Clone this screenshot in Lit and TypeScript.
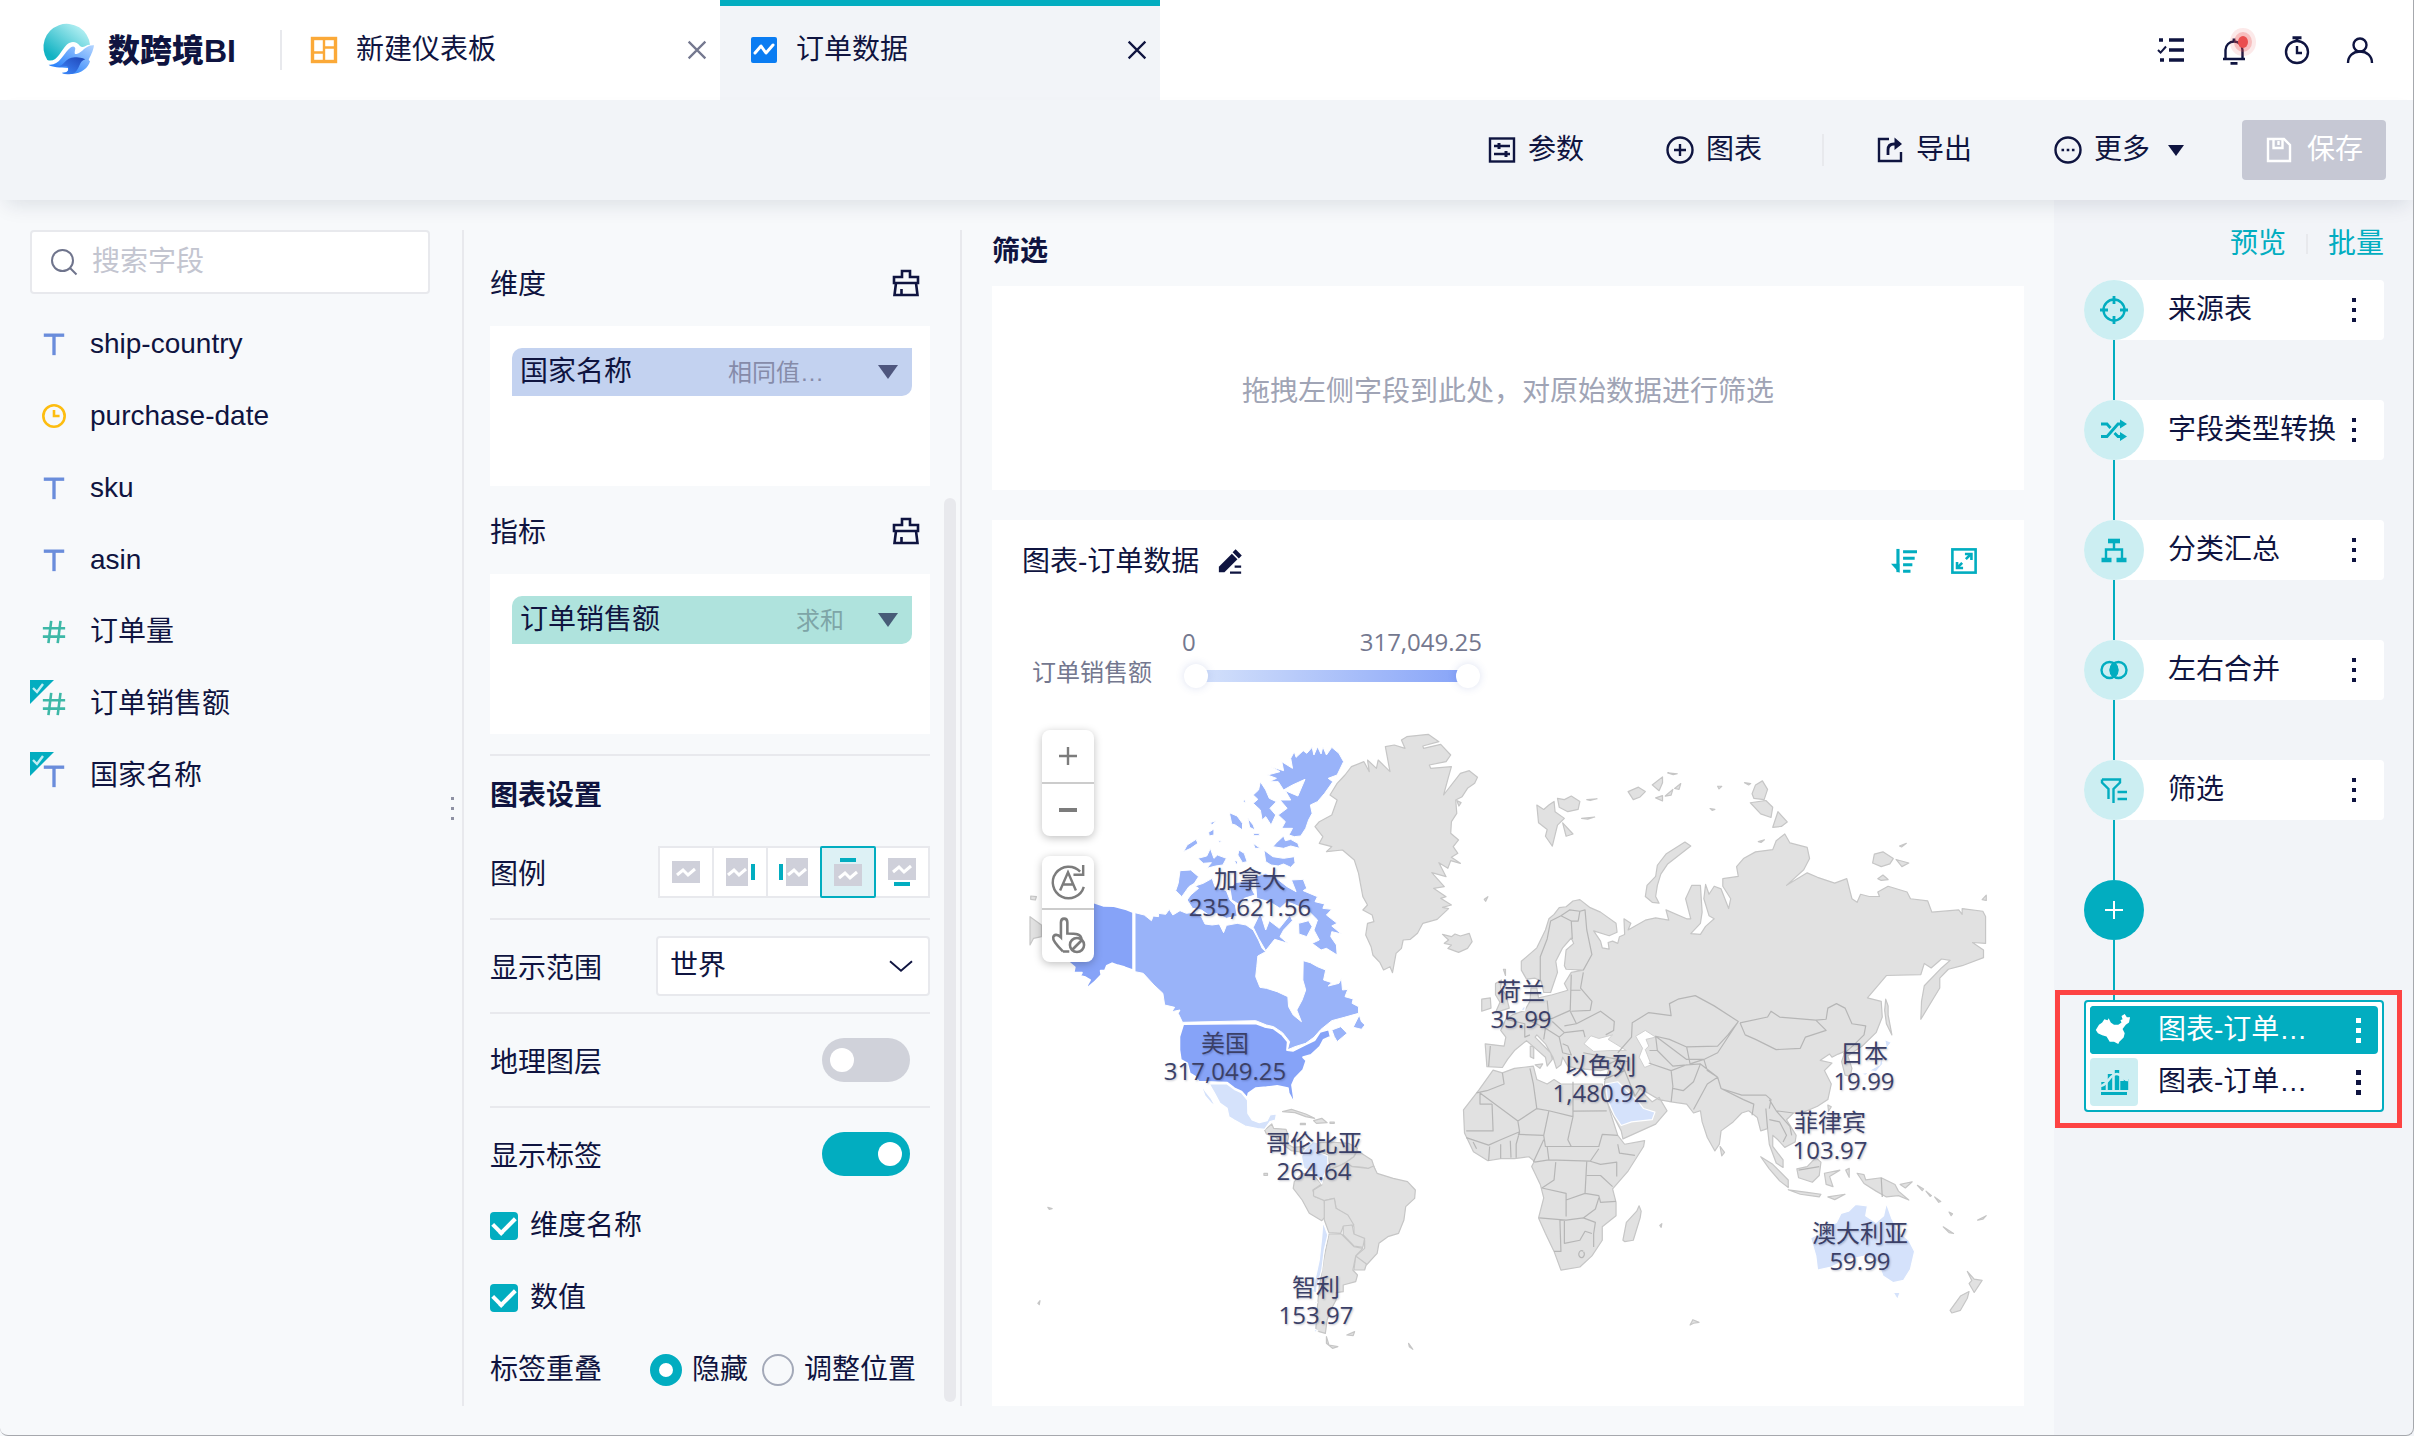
import { LitElement, html, css, svg, TemplateResult } from "lit";
import { customElement, state } from "lit/decorators.js";
import { classMap } from "lit/directives/class-map.js";

const icon = (size: number, body: TemplateResult, cls = "") =>
  html`<svg class="icon ${cls}" width=${size} height=${size} viewBox="0 0 28 28" fill="none" stroke="currentColor" stroke-width="2.4" aria-hidden="true">${body}</svg>`;

const icons = {
  board: svg`<rect x="2.5" y="2.5" width="23" height="23" stroke-width="3.4"/><path d="M14 3v22M3 16.500h11M14 11.500h11"/>`,
  dataset: svg`<rect x="1" y="1" width="26" height="26" rx="2" fill="#0a7cf2" stroke="none"/><path d="M5 17l6-7 5 7 7-8" stroke="#fff" stroke-width="3" stroke-linejoin="round" stroke-linecap="round"/>`,
  close: svg`<path d="M5 5l18 18M23 5L5 23"/>`,
  tasks: svg`<path d="M12 4h15M12 14h15M12 24h15" stroke-width="3.6"/><path d="M2 4h4M3 24h4" stroke-width="3.6"/><path d="M1 14l2.600 2.600L9 10.500" stroke-width="2"/>`,
  bell: svg`<path d="M3 23h22M5.500 23V14a8.500 8.500 0 0 1 17 0v9" stroke-linejoin="round"/><path d="M10.500 27.400h7M14 5V2.500" stroke-width="2.800"/>`,
  timer: svg`<circle cx="14" cy="16" r="11"/><path d="M9.500 1.800h9M14 2v4" stroke-width="3"/><path d="M14 10v7h5"/>`,
  user: svg`<circle cx="14" cy="9" r="6.500"/><path d="M2 27c0-7 5-11.500 12-11.500S26 20 26 27"/>`,
  params: svg`<rect x="2" y="2.500" width="24" height="23"/><path d="M6 10h16M6 18h16"/><path d="M11 7v6M18 15v6" stroke-width="3"/>`,
  plusCircle: svg`<circle cx="14" cy="14" r="12.500"/><path d="M14 8v12M8 14h12"/>`,
  exportFile: svg`<path d="M13 3H3v22h22v-9"/><path d="M12 19v-5c0-4 2-6 6-6h6" stroke-width="2.800"/><path d="M18.500 1.500L26 8l-7.500 6z" fill="currentColor" stroke="none"/>`,
  more: svg`<circle cx="14" cy="14" r="12.500"/><path d="M7.500 14h2.600M12.700 14h2.600M17.900 14h2.600" stroke-width="2.600"/>`,
  save: svg`<path d="M3 3h16l6 6v16H3z"/><path d="M8.500 3v9h9V3M13.500 5v4"/>`,
  search: svg`<circle cx="12.500" cy="12.500" r="10.500" stroke-width="2"/><path d="M20 20l6.500 6.500" stroke-width="2"/>`,
  text: svg`<path d="M3 4.500h22" stroke-width="3.600"/><path d="M14 4v22" stroke-width="3.600"/>`,
  date: svg`<circle cx="14" cy="14" r="11.500" stroke-width="2.800"/><path d="M14 7.500V14h6" stroke-width="2.800"/>`,
  number: svg`<path d="M2 10h24M2 19h24M11 2L8 26M21 2l-3 24" stroke-width="2.800"/>`,
  broom: svg`<path d="M2 8h8V2h8v6h8v6H2zM4 14L2.500 26h23L24 14M9.500 26v-6" stroke-width="2.600"/>`,
  edit: svg`<path d="M3 19L17 5l6 6L9 25H3z" transform="translate(-1 0)" fill="currentColor" stroke="none"/><path d="M20 2l5 5-1.500 1.500-5-5z" fill="currentColor"/><path d="M14 25.500h12M19 19h7" stroke-width="2.400"/>`,
  sort: svg`<path d="M7.500 1v25" stroke-width="3.400"/><path d="M0 17h9v10z" fill="currentColor" stroke="none"/><path d="M13 4h15M13 11h12.500M13 18h10M13 25h8" stroke-width="3.200"/>`,
  expand: svg`<rect x="1.500" y="1.500" width="25" height="25" stroke-width="2.800"/><path d="M16 12l5-5M7 21l5-5" stroke-width="2.800"/><path d="M15 6.500h7V13M13 21.500H6.500V15" stroke-width="2.800"/>`,
  target: svg`<circle cx="14" cy="14" r="10.500"/><path d="M14 0v8M14 20v8M0 14h8M20 14h8" stroke-width="2.800"/>`,
  shuffle: svg`<path d="M1 8h6l3.500 4M1 20.500h6L18 8h4M14.500 17l3.500 3.500h4" stroke-width="2.800"/><path d="M20 3.500L27 8l-7 4.500zM20 16l7 4.500-7 4.500z" fill="currentColor" stroke="none"/>`,
  tree: svg`<path d="M8 5h12" stroke-width="4.600"/><path d="M14 6v7M6 23v-9.500h16V23"/><path d="M1.500 24h10M16.500 24h10" stroke-width="4.600"/>`,
  merge: svg`<circle cx="9.500" cy="14" r="8"/><circle cx="18.500" cy="14" r="8"/><path d="M14 7.500a8.500 8.500 0 0 1 0 13a8.500 8.500 0 0 1 0-13z" fill="currentColor"/>`,
  filter: svg`<path d="M2 3.500h18v3L13.500 13v14M8.500 23V13L2 6.500v-3"/><path d="M17.500 16h9.500M17.500 23h9.500"/>`,
  plus: svg`<path d="M14 5v18M5 14h18" stroke-width="2"/>`,
  china: svg`<path d="M0 9l3-2 2-3 3 1 1-2 2 4 3 2 4 0 3-2 -1-2 2-1-1-3 3-2 2 3 3 0-1 5-3 2-3 4 2 4-1 4-4 4-1 2-4-2-4 0-3-5-4-1-4-2-2-3z" fill="currentColor" stroke="none"/>`,
  bars: svg`<path d="M1 25.500h26" stroke-width="3"/><path d="M3.500 22v-8M10 22V6M17 22V2M22.500 22v-9M26 22V11" stroke-width="4.400"/><path d="M0 18c8 0 9-12 17-12 5 0 6 6 11 6" stroke="#cceef2" stroke-width="2.600"/>`,
};

/* Coastlines are digitised on two sheets: west (2.8 x 3 units per px) and east (2.9 x 2.24). */
const LAND_NORTH = [
  "M1195 710L1255 703 1285 725 1240 738 1242 745 1290 733 1318 765 1305 785 1258 795 1262 805 1320 800 1312 830 1298 885 1345 820 1370 812 1393 832 1385 850 1365 865 1350 890 1332 900 1335 940 1320 965 1318 1000 1340 1020 1325 1040 1338 1060 1320 1072 1345 1090 1318 1082 1310 1105 1285 1088 1305 1130 1265 1118 1300 1160 1270 1165 1305 1190 1290 1195 1320 1215 1295 1222 1312 1226 1280 1258 1240 1270 1225 1300 1205 1318 1185 1320 1180 1345 1165 1360 1155 1418 1148 1400 1130 1410 1120 1388 1100 1365 1095 1340 1080 1305 1085 1270 1103 1265 1098 1245 1072 1230 1085 1215 1072 1190 1065 1150 1060 1120 1048 1080 1015 1050 970 1055 985 1040 950 1030 960 1010 938 980 950 965 985 945 1000 900 980 885 1000 850 1022 825 1040 800 1075 785 1090 815 1085 780 1110 805 1115 780 1148 815 1135 740 1160 735 1190 745 1180 720Z",
  "M1295 1303L1320 1310 1330 1302 1345 1308 1370 1300 1378 1325 1365 1345 1340 1357 1310 1345 1320 1335 1300 1330 1312 1320Z",
  "M140 1250L172 1275 172 1310 150 1315 140 1335ZM142 1188L158 1190 155 1200 142 1198Z",
  "M1412 1198l10 -8 -6 14ZM1335 902l12 6 -6 10Z",
];
const CANADA = [
  "M434 1238L460 1245 480 1262 485 1248 500 1250 500 1240 520 1243 530 1228 540 1245 560 1232 578 1240 600 1236 620 1250 630 1272 650 1275 670 1272 682 1298 690 1276 720 1270 745 1275 765 1290 780 1320 790 1345 800 1355 778 1368 775 1400 772 1430 784 1462 802 1465 832 1475 862 1490 864 1520 877 1545 900 1565 887 1530 902 1500 912 1470 904 1440 905 1382 925 1388 945 1400 968 1410 962 1440 985 1448 975 1458 1005 1450 1012 1435 1015 1470 1030 1468 1022 1490 1045 1497 1042 1510 1060 1520 1060 1540 1020 1552 985 1562 955 1588 935 1612 912 1630 882 1640 860 1650 867 1625 847 1598 822 1580 802 1575 772 1562 567 1567 555 1540 560 1530 537 1535 545 1522 517 1515 512 1480 487 1455 457 1420 434 1415Z",
  "M870 775L880 755 885 772 905 752 915 760 930 742 935 765 945 740 955 762 960 740 970 765 985 742 1005 760 1018 785 1000 825 975 835 988 845 965 880 945 905 925 915 930 940 920 960 912 985 898 1008 880 1010 865 1005 875 985 845 985 855 965 835 945 860 925 840 900 870 900 855 872 890 888 910 838 875 855 850 870 835 845 810 845 830 835 805 825 840 815 815 800 850 812 845 785 875 805Z",
  "M785 845L800 870 810 895 830 905 812 925 828 945 815 975 800 950 790 960 785 930 765 910 778 898 765 885 780 870Z",
  "M740 897l5 12 -8 -4ZM698 938L720 948 735 970 735 990 715 975 705 972ZM750 955L765 975 770 990 755 982ZM766 1000h16v7h-16ZM645 968L660 962 650 975ZM640 997L655 987 655 1005 642 1008Z",
  "M830 1028L850 1008 855 1022 870 1018 890 1030 895 1045 870 1038 850 1045 820 1040Z",
  "M795 1050L820 1070 850 1075 880 1070 882 1088 870 1102 850 1092 835 1098 815 1095 800 1085Z",
  "M610 1075L635 1068 645 1045 655 1075 665 1065 690 1075 680 1095 660 1098 635 1105 648 1088 625 1090Z",
  "M570 1055L580 1035 605 1018 610 1030 590 1045ZM725 1050L740 1060 748 1085 735 1088 722 1065ZM765 1030L785 1045 770 1045ZM712 1080l10 5 -4 10ZM668 1020l8 4 -6 4Z",
  "M560 1112L590 1110 612 1130 600 1150 585 1160 565 1190 548 1172 555 1150Z",
  "M590 1185L612 1165 602 1158 625 1150 650 1135 658 1160 690 1172 700 1200 715 1215 720 1248 690 1255 660 1240 640 1245 620 1230 595 1225 580 1200Z",
  "M700 1165L715 1148 765 1140 760 1165 770 1185 740 1195 728 1215 705 1200Z",
  "M770 1130L800 1120 830 1135 860 1160 885 1175 872 1140 905 1138 915 1165 905 1172 945 1190 938 1205 965 1212 960 1225 985 1228 970 1245 1000 1270 985 1278 1012 1302 985 1295 982 1310 998 1335 1000 1365 970 1345 955 1350 930 1330 950 1320 935 1290 945 1260 915 1228 890 1218 860 1205 840 1225 810 1205 775 1195Z",
  "M765 1282L785 1238 800 1290 810 1262 838 1285 868 1245 875 1262 850 1290 840 1310 862 1330 825 1318 800 1352 780 1315ZM892 1270L920 1262 930 1280 915 1310 893 1302Z",
  "M1048 1575L1062 1545 1068 1565 1078 1575 1068 1588 1045 1582ZM985 1590L1010 1580 1028 1600 1000 1625 992 1610Z",
];
const ALASKA = "M250 1205L318 1207 345 1217 375 1218 410 1228 429 1236 429 1411 405 1402 385 1396 370 1390 355 1398 350 1412 338 1412 340 1425 320 1447 305 1460 297 1476 300 1455 308 1440 295 1432 280 1428 285 1418 262 1418 265 1402 250 1388 220 1350Z";
const USA = "M457 192L660 190 685 200 710 205 735 225 750 245 748 270 765 272 800 253 825 240 840 215 865 208 870 230 850 240 840 260 825 275 815 285 793 292 802 302 793 330 770 355 762 375 768 420 765 425 752 400 750 385 720 378 690 382 660 385 640 400 637 415 620 395 600 385 580 368 500 365 490 350 475 340 468 310 450 300 446 270 446 230Z";
const PALE_WEST = [
  "M530 372L580 372 600 388 620 398 637 420 638 460 650 480 670 488 692 482 700 465 718 462 715 480 700 485 685 508 665 506 630 498 600 480 585 470 580 445 560 430 545 400Z",
  "M505 370L520 395 535 415 548 440 536 430 518 408Z",
  "M795 572L820 545 835 548 832 575 862 588 862 620 850 650 845 672 825 640 795 625 788 590Z",
  "M848 785L862 825 852 870 845 930 832 980 830 1000 820 995 826 960 838 900 845 830ZM826 1018l6 10 -6 4ZM822 1105l12 8 -8 4ZM835 1125l14 12 -12 -4Z",
];
const LAND_SOUTH = [
  "M685 510L705 492 710 505 745 508 752 530 748 552 765 562 790 560 800 572 785 576 760 572 735 552 715 530 690 522Z",
  "M735 455L760 448 800 462 825 475 800 470 770 458ZM822 482L845 475 860 488 830 490ZM785 490h14v4h-14ZM868 486h12v4h-12Z",
  "M838 548L870 546 920 550 945 565 935 590 915 605 890 620 868 628 862 585 835 575Z",
  "M945 572L985 600 995 632 960 622 918 618 915 605 935 590Z",
  "M768 665L790 640 820 645 845 672 820 690 825 710 852 720 855 770 845 782 810 760 790 720 765 685Z",
  "M868 628L915 608 930 620 975 625 990 618 1000 640 1045 655 1085 665 1107 690 1105 715 1080 740 1075 780 1060 820 1030 830 1005 850 1000 880 970 915 938 890 965 865 965 840 935 825 935 800 920 770 885 745 880 715 852 722 822 708 822 690 845 675 850 640Z",
  "M852 722L880 715 885 745 918 765 935 795 905 800 898 820 865 818 852 780Z",
  "M905 798L930 795 935 822 965 835 960 862 935 858 905 825Z",
  "M940 888L970 912 965 930 935 930Z",
  "M865 822L900 822 935 860 960 865 940 888 932 930 945 945 940 965 905 975 905 995 885 998 885 1020 870 1050 860 1080 855 1120 828 1112 832 1050 838 980 850 900Z",
  "M858 1130L865 1155 890 1160 875 1165 858 1150ZM915 1125l22 -10 -4 12ZM1088 1150l12 18 -10 -8ZM50 1030l6 -8 -2 12ZM78 742l12 4 -8 2ZM683 640h10v6h-10Z",
];
const LAND_EAST = [
  "M120 630L165 600 190 560 200 535 215 525 230 510 250 508 270 495 290 492 320 510 350 520 395 545 398 565 375 573 330 562 350 585 355 600 375 603 372 588 385 585 400 590 405 575 420 570 418 535 438 545 430 560 480 538 510 533 548 538 540 515 600 535 612 535 597 490 615 460 640 460 645 520 640 545 612 568 640 570 655 552 680 535 665 528 650 490 655 458 665 480 680 462 700 468 722 512 728 490 705 462 705 445 750 440 745 418 765 400 800 385 850 380 860 360 885 345 900 365 950 375 957 400 940 425 890 460 950 432 980 442 1030 455 1065 445 1080 490 1095 498 1105 480 1130 485 1160 485 1155 475 1185 462 1240 475 1250 490 1300 495 1312 520 1390 515 1400 525 1400 512 1460 518 1468 530 1468 590 1430 588 1462 605 1462 622 1400 640 1360 648 1335 668 1335 690 1280 760 1282 720 1290 685 1340 645 1365 628 1340 625 1310 645 1290 635 1280 660 1180 662 1125 712 1165 720 1168 755 1150 790 1110 820 1068 842 1080 870 1075 888 1060 885 1050 855 1060 832 1040 838 1022 845 1015 838 988 852 1022 858 1000 875 1020 905 1010 940 980 955 940 968 910 970 890 985 918 1020 915 1035 885 1047 865 1030 850 1020 850 1045 880 1075 880 1092 860 1082 840 1040 835 1005 815 1010 805 980 780 965 760 970 735 990 700 1010 695 1040 682 1055 660 1025 645 990 640 965 620 970 600 950 555 945 520 940 480 922 465 915 480 930 500 945 520 935 543 965 510 995 415 1028 410 1010 380 965 360 930 362 900 375 870 350 875 280 870 255 865 240 845 235 862 222 870 212 845 190 815 165 795 160 800 205 835 210 850 195 865 190 845 150 818 135 808 100 830 80 850 65 868 20 866 15 815 70 820 75 800 60 785 75 760 95 750 130 740 145 720 148 690 165 690 170 712 210 705 255 695 245 680 265 655 300 650 250 648 245 640 250 605 272 590 265 578 240 600 220 630 225 655 205 700 185 700 178 675 160 668 135 670 120 650Z",
  "M38 874L65 880 100 870 155 865 165 895 195 905 215 895 235 905 355 905 375 960 400 1020 420 1040 478 1032 475 1045 430 1100 385 1140 395 1170 395 1200 355 1225 355 1255 325 1290 290 1315 235 1322 215 1280 190 1240 170 1205 185 1160 175 1130 150 1090 158 1078 142 1068 100 1072 60 1072 23 1077 -19 1057 -45 1015 -48 963 -3 918Z",
  "M165 280L185 290 200 280 215 272 218 295 245 310 225 325 210 372 190 350 195 335 170 320ZM225 265L245 268 265 260 290 272 285 290 255 295 230 285ZM240 320L270 345 250 350ZM310 268l30 -2 -20 4ZM295 310l38 -3 -20 5Z",
  "M430 250L460 240 480 250 465 262 445 268ZM500 235L530 217 530 230 520 248ZM565 243L583 232 578 245ZM538 260L560 245 555 258ZM510 264l20 -5 0 12ZM545 208l28 2 -12 2ZM690 238l12 0 -8 6ZM668 288l14 2 -8 2Z",
  "M790 255L800 235 820 226 835 245 825 268 795 265ZM785 275L830 270 850 285 845 308 815 300ZM850 330L865 295 892 318 875 328ZM768 230l18 2 -6 3ZM808 362l18 -4 -10 6Z",
  "M480 485L485 460 510 440 515 415 540 390 595 363 612 372 585 388 545 412 525 435 515 460 510 485 520 500 500 498Z",
  "M1140 410L1145 390 1170 385 1200 400 1190 412 1165 418ZM1208 402L1245 410 1225 418ZM1155 445l15 -8 15 10 -20 2ZM1218 372l20 -6 -14 8ZM1458 492l12 -10 0 12Z",
  "M415 1255L425 1215 455 1190 462 1178 468 1190 465 1205 445 1255 420 1258Z",
  "M697 1045L710 1058 702 1066ZM1178 715L1185 730 1185 750 1196 795 1180 770 1175 740Z",
  "M45 680L62 672 60 690 75 705 85 735 45 745 58 722 45 705ZM5 715L30 712 32 735 5 742ZM68 648h6v14ZM146 820l10 2 0 26 -10 -4ZM160 862l22 -2 -8 10Z",
  "M815 1068L850 1085 895 1120 895 1137 870 1122 840 1095ZM895 1142L950 1148 990 1152 985 1158 930 1152ZM920 1095L950 1090 975 1070 990 1080 985 1110 965 1125 925 1115Z",
  "M1000 1105L1045 1098 1015 1112 1025 1135 1005 1130ZM1062 1098l10 -4 0 20ZM1095 1105L1115 1108 1120 1120 1165 1115 1205 1130 1215 1145 1245 1165 1215 1155 1180 1158 1150 1145 1115 1128ZM1220 1130l35 -6 -20 14ZM1010 1158l50 -6 -30 12Z",
  "M1270 1132l18 8 -4 4ZM1295 1145l16 10 -4 2ZM1320 1158l18 10 -6 2ZM1345 1225L1375 1240 1362 1238ZM1362 1192l10 4 -4 4ZM1445 1210l25 -10 -10 8ZM1010 952l10 4 -8 10Z",
  "M1415 1325L1435 1342 1458 1345 1435 1372 1420 1352 1428 1345ZM1365 1412L1395 1380 1420 1370 1415 1385 1395 1412 1370 1418ZM610 1445l8 -12 18 6 -16 2ZM522 1222l6 -4 -2 8Z",
];
const WATER_EAST = "M302 815L322 797 345 803 385 795 372 805 425 830 380 830 330 832ZM452 798L480 785 510 800 482 805 490 820 480 828 497 862 478 868 462 845 472 825Z";
const PALE_EAST = [
  "M365 905L400 900 440 930 460 945 475 960 508 968 500 985 440 990 410 998 390 975 370 940Z",
  "M1175 805L1195 812 1180 825ZM1165 840L1170 860 1150 878 1130 875 1160 862ZM1105 882l25 -4 -10 8ZM1040 1055l10 -8 -2 14ZM118 740l14 -14 -2 14Z",
  "M985 1240L1010 1225 1035 1215 1048 1195 1070 1190 1090 1175 1125 1178 1120 1200 1150 1215 1172 1200 1180 1172 1195 1205 1215 1235 1245 1255 1262 1280 1250 1320 1230 1345 1200 1350 1170 1335 1155 1305 1120 1290 1060 1300 1020 1315 980 1322 975 1290 960 1250ZM1200 1372L1220 1372 1212 1388Z",
];
const BORDERS_EAST =
  "M400 835L440 800 442 768 490 745 555 752 550 725 575 715 625 707 680 730 750 765 720 795 690 820 600 822 550 805 510 798 515 830 492 830M750 765L690 835 650 850 610 860 600 822M755 768L835 755 845 742 870 755 975 762 1005 785 945 800 930 825 860 828 800 805 770 795 755 768M975 762L1005 760 1010 735 1035 725 1060 735 1080 770 1120 775 1115 795 1085 818 1055 838" +
  "M515 830L560 865 600 862M510 798L600 850 650 850M490 858L555 875 560 910 555 945M360 895L420 875 400 850 375 860M420 875L450 932 465 915M300 835L400 850 430 855M555 875L600 862 640 860 620 900 590 920 560 915M640 860L690 890 660 905 620 962M650 850L660 875 690 890 700 915 760 930 830 930 845 940 840 960M700 915L765 940 795 950 790 975M840 940L860 965 910 970M830 960L835 1005M840 985L870 990 890 1020 880 1035M860 965L900 1000 905 1020" +
  "M175 675L175 620 195 580 205 540 235 528 265 540 268 580M265 540L285 540 290 518 305 515 310 560 325 615 300 650M235 528L260 515 290 518M265 660L262 740 210 758 145 762M300 655L292 690 325 720 320 740 265 742M265 695L292 695M262 742L280 770 350 742 390 765 388 785 365 795M195 718L200 755M210 765L245 790 300 785 305 800M245 790L230 800 190 780 150 765M230 800L240 835 265 840 255 820 240 815M75 760L130 770 130 800 145 795M190 780L185 805M245 775L280 770M30 820L25 866" +
  "M65 880L70 905 20 920 -10 925M0 925L110 988 165 960 155 905 145 870M270 900L270 978 200 965 165 960M270 966L368 965M35 950L38 1010 -40 1010M0 925L0 950 35 950M110 988L115 1012 60 1030 25 1042 -40 1025M110 1018L185 1020 200 965M270 978L255 1030 265 1045 190 1045 185 1020M115 1012L105 1040 105 1070M185 1030L155 1080M195 1045L200 1075 158 1080M265 1045L345 1045 355 1018 400 1020M200 1075L320 1078 345 1050M400 1040L405 1060 450 1065M320 1078L350 1085 397 1080 397 1112M220 1080L215 1120 180 1138 250 1150 250 1202M310 1078L305 1150 250 1165M310 1110L350 1110 385 1135M305 1150L345 1155 350 1170 395 1168M172 1205L250 1210 300 1205 335 1185 345 1160M232 1210L235 1280 215 1280M245 1212L245 1262 290 1255 305 1235 325 1240M300 1205L335 1215 330 1240 330 1270M300 1280a8 8 0 1 0 1 1M28 1045L25 1077M60 1040L60 1072M88 1032L90 1070M-20 1035L-10 1050M1165 1115L1168 1158M925 1098L985 1090";

interface GeoLabel { name: string; value: string; x: number; y: number }
const LABELS: GeoLabel[] = [
  { name: "加拿大", value: "235,621.56", x: 228, y: 180 },
  { name: "美国", value: "317,049.25", x: 203, y: 344 },
  { name: "哥伦比亚", value: "264.64", x: 292, y: 444 },
  { name: "智利", value: "153.97", x: 294, y: 588 },
  { name: "荷兰", value: "35.99", x: 499, y: 292 },
  { name: "以色列", value: "1,480.92", x: 578, y: 366 },
  { name: "日本", value: "19.99", x: 842, y: 354 },
  { name: "菲律宾", value: "103.97", x: 808, y: 423 },
  { name: "澳大利亚", value: "59.99", x: 838, y: 534 },
];

type Kind = "text" | "date" | "number";
const FIELDS: { name: string; kind: Kind; used?: boolean }[] = [
  { name: "ship-country", kind: "text" },
  { name: "purchase-date", kind: "date" },
  { name: "sku", kind: "text" },
  { name: "asin", kind: "text" },
  { name: "订单量", kind: "number" },
  { name: "订单销售额", kind: "number", used: true },
  { name: "国家名称", kind: "text", used: true },
];

const STEPS = [
  { name: "来源表", glyph: icons.target },
  { name: "字段类型转换", glyph: icons.shuffle },
  { name: "分类汇总", glyph: icons.tree },
  { name: "左右合并", glyph: icons.merge },
  { name: "筛选", glyph: icons.filter },
];

/* Thumbnail box and accent bar for each legend placement. */
const PLACEMENTS = [
  { id: "none", label: "无图例", box: [0, 3, 28, 22], bar: null },
  { id: "right", label: "右侧", box: [0, 0, 22, 28], bar: [25, 6, 4, 16] },
  { id: "left", label: "左侧", box: [6, 0, 22, 28], bar: [-1, 6, 4, 16] },
  { id: "top", label: "顶部", box: [0, 6, 28, 22], bar: [6, 0, 16, 4] },
  { id: "bottom", label: "底部", box: [0, 0, 28, 22], bar: [6, 24, 16, 4] },
] as const;

@customElement("world-map")
export class WorldMap extends LitElement {
  static styles = css`
    :host { display: block; }
    .map { display: block; width: 100%; height: auto; font-family: "Open Sans", "Noto Sans CJK SC", sans-serif; }
    path { vector-effect: non-scaling-stroke; stroke-linejoin: round; }
    .land { fill: #e1e1e1; stroke: #c6c6c6; stroke-width: 1.2; }
    .border { fill: none; stroke: #b6b6b6; stroke-width: 1.2; }
    .water { fill: #fff; stroke: #d0d0d0; stroke-width: 1; }
    .pale { fill: #d5e2fb; stroke: #fff; stroke-width: 1.2; }
    .mid { fill: #99b3f9; stroke: #fff; stroke-width: 1; }
    .strong { fill: #86a3f8; stroke: #fff; stroke-width: 2; }
    .label { font-size: 24px; fill: #3b4067; text-anchor: middle; text-shadow: 1px 1px 2px rgba(20, 24, 60, 0.25); }
  `;
  render() {
    const draw = (list: string[], cls: string) => list.map((d) => svg`<path class=${cls} d=${d} />`);
    return html`<svg class="map" viewBox="0 0 972 678" role="img" aria-label="订单销售额世界地图">
      <g transform="translate(-42 -208) scale(.35714 .33333)">
        ${draw(LAND_NORTH, "land")}${draw(CANADA, "mid")}<path class="strong" d=${ALASKA} />
      </g>
      <g transform="translate(-2 252) scale(.35714 .33333)">
        <path class="strong" d=${USA} />${draw(LAND_SOUTH, "land")}${draw(PALE_WEST, "pale")}
      </g>
      <g transform="translate(458 -28) scale(.3444 .4464)">
        ${draw(LAND_EAST, "land")}<path class="water" d=${WATER_EAST} />
        <path class="border" d=${BORDERS_EAST} />${draw(PALE_EAST, "pale")}
      </g>
      ${LABELS.map((l) => svg`<text class="label" y=${l.y}><tspan x=${l.x}>${l.name}</tspan><tspan x=${l.x} dy="28">${l.value}</tspan></text>`)}
    </svg>`;
  }
}

@customElement("app-root")
export class AppRoot extends LitElement {
  @state() private placement = "top";

  static styles = css`
    :host {
      --teal: #02adc0; --navy: #0f1440; --line: #e8e9ed; --tint: #cceef2;
      display: block; color: var(--navy);
      font: 28px/44px "Liberation Sans", "Noto Sans CJK SC", sans-serif;
    }
    * { box-sizing: border-box; }
    button, input, select { font: inherit; color: inherit; margin: 0; padding: 0; border: 0; background: none; }
    button { display: inline-flex; align-items: center; cursor: pointer; white-space: nowrap; }
    ul, ol, h1, h2, h3, p { margin: 0; padding: 0; list-style: none; font-size: inherit; }
    a { color: var(--teal); text-decoration: none; }
    .icon { flex: none; display: block; overflow: visible; }
    .window { position: relative; display: flex; flex-direction: column; min-height: 100vh; background: #f7f9fb; overflow: hidden; }
    .window::after { content: ""; position: absolute; inset: 0; border: solid #a6a8ad; border-width: 0 1px 1px 0; pointer-events: none; z-index: 3; border-radius: 0 0 8px 8px; }

    .top { display: flex; align-items: stretch; height: 100px; background: #fff; }
    .brand { display: flex; align-items: center; gap: 14px; padding-left: 44px; width: 280px; font-size: 32px; font-weight: 900; white-space: nowrap; }
    .brand span { padding-top: 2px; }
    .rule { flex: none; align-self: center; width: 2px; height: 40px; background: var(--line); }
    .tab { display: flex; align-items: center; width: 440px; padding: 0 10px 0 30px; }
    .tab.first { width: 438px; padding-left: 28px; }
    .tab.active { background: #f2f4f8; border-top: 6px solid var(--teal); padding-bottom: 6px; }
    .tab .name { flex: 1; padding-left: 18px; }
    .tab .board { color: #fba938; }
    .tab .close { color: #74788f; }
    .tab.active .close { color: var(--navy); }
    .quick { display: flex; align-items: center; gap: 35px; margin-left: auto; padding-right: 40px; }
    .alert { position: relative; }
    .alert::after { content: ""; position: absolute; right: 0; top: 0; width: 10px; height: 12px; border-radius: 50%; background: #ea4e4e; box-shadow: 0 0 0 4px rgba(234, 78, 78, 0.28), 0 0 0 8px rgba(234, 78, 78, 0.12); }

    .tools { position: relative; z-index: 2; display: flex; align-items: center; justify-content: flex-end; height: 100px; padding-right: 28px; background: #f2f4f8; box-shadow: 0 10px 20px -6px rgba(20, 30, 60, 0.12); }
    .tool { gap: 12px; margin-right: 82px; }
    .tool.before-rule { margin-right: 60px; }
    .tools .rule { height: 32px; margin-right: 52px; }
    .tool.more { margin-right: 58px; }
    .caret { width: 0; height: 0; border: 8px solid transparent; border-top: 11px solid currentColor; border-bottom: 0; }
    .more .caret { margin-left: 6px; }
    .save { justify-content: center; gap: 14px; width: 144px; height: 60px; border-radius: 4px; background: #c6c8d4; color: #fff; }

    .body { flex: 1; display: flex; align-items: stretch; }
    .fields { position: relative; flex: none; width: 462px; padding: 30px 32px 30px 30px; }
    .search { display: flex; align-items: center; gap: 14px; height: 64px; padding: 0 18px; border: 2px solid var(--line); border-radius: 4px; background: #fff; color: #6f748c; }
    .search input { flex: 1; min-width: 0; outline: 0; }
    .search input::placeholder { color: #c3c5d0; opacity: 1; }
    .list { padding-top: 14px; }
    .field { position: relative; display: flex; align-items: center; gap: 23px; height: 72px; padding-left: 11px; }
    .text { color: #6a8ddb; } .date { color: #fdbd10; } .number { color: #3db8a7; }
    .used { position: absolute; left: 0; top: 12px; }
    .grip { position: absolute; right: 8px; top: 0; bottom: 20px; display: grid; align-content: center; gap: 7px; }
    .grip i { width: 3px; height: 3px; background: #8e91a3; }

    .config { flex: none; display: flex; width: 500px; margin: 30px 0; padding: 0 4px 0 26px; border: solid var(--line); border-width: 0 2px; }
    .settings { width: 440px; padding-top: 8px; }
    .bar { width: 12px; margin: 268px 0 4px 14px; border-radius: 6px; background: var(--line); }
    .head { display: flex; justify-content: space-between; align-items: center; padding: 24px 10px 20px 0; }
    .head h2 { font-weight: 400; line-height: 42px; padding-top: 2px; }
    .head button { padding-bottom: 3px; }
    .drop { height: 160px; padding: 22px 18px 0 22px; background: #fff; }
    .pill { width: 100%; height: 48px; padding: 0 14px 0 8px; border-radius: 10px 0 10px 0; text-align: left; }
    .pill.dim { background: #c3d2f0; } .pill.metric { background: #afe3dd; }
    .pill .grow { flex: 1; }
    .pill small { width: 116px; font-size: 24px; line-height: 42px; padding-top: 2px; color: #868ba9; }
    .pill.metric small { text-align: right; color: #7ea5a7; }
    .pill .caret { margin-left: 34px; border-width: 14px 10px 0; opacity: 0.65; }
    .title { margin-top: 20px; padding: 18px 0; border-top: 2px solid var(--line); font-weight: 700; }
    .row { display: flex; align-items: center; justify-content: space-between; padding: 24px 0; border-top: 2px solid var(--line); }
    .row > span, .row > label { padding-top: 6px; line-height: 38px; }
    .row.legend-row { border-top: 0; padding: 10px 0 20px; }
    .row.select-row { padding: 16px 0; }
    .row.last { padding-bottom: 14px; }
    .seg { display: flex; }
    .seg button { justify-content: center; width: 56px; height: 52px; border: 2px solid var(--line); background: #fff; margin-left: -2px; }
    .seg button.on { position: relative; border-color: var(--teal); background: #ddf1f5; border-radius: 2px; }
    .pick { display: grid; align-items: center; width: 274px; }
    .pick > * { grid-area: 1 / 1; }
    .pick select { height: 60px; padding: 0 12px; appearance: none; border: 2px solid var(--line); border-radius: 4px; background: #fff; }
    .pick .icon { justify-self: end; margin-right: 18px; pointer-events: none; }
    .switch { appearance: none; width: 88px; height: 44px; margin-right: 20px; padding: 10px 8px; border-radius: 22px; background: #d0d2da; display: flex; }
    .switch::after { content: ""; width: 24px; height: 24px; border-radius: 50%; background: #fff; }
    .switch:checked { background: var(--teal); justify-content: flex-end; }
    .tick { display: flex; align-items: center; gap: 12px; height: 72px; }
    .tick input { appearance: none; display: grid; place-items: center; width: 28px; height: 28px; border-radius: 4px; background: var(--teal); }
    .tick input::after { content: ""; width: 18px; height: 10px; margin-bottom: 6px; border: solid #fff; border-width: 0 0 4px 4px; transform: rotate(-45deg); }
    .radios { display: flex; align-items: center; height: 72px; }
    .radios label { display: flex; align-items: center; gap: 10px; margin-right: 14px; white-space: nowrap; }
    .radios .lead { width: 160px; }
    .radios input { appearance: none; width: 32px; height: 32px; border: 2px solid #a3a9b8; border-radius: 50%; }
    .radios input:checked { border: 9px solid var(--teal); background: #fff; }

    .main { flex: 1; min-width: 0; display: flex; flex-direction: column; padding: 30px; }
    .main h2 { padding-bottom: 12px; font-weight: 700; }
    .filters { display: grid; place-items: center; height: 204px; margin-bottom: 30px; padding-top: 8px; background: #fff; color: #a0a4b5; }
    .card { flex: 1; padding: 20px 30px; background: #fff; }
    .cardhead { display: flex; align-items: center; padding-right: 17px; }
    .cardhead h3 { font-weight: 400; margin-right: 18px; }
    .cardhead .acts { display: flex; gap: 34px; margin-left: auto; padding-bottom: 3px; color: var(--teal); }
    .legend { display: flex; align-items: flex-end; gap: 30px; margin: 42px 0 20px 10px; font: 24px/32px "Open Sans", "Noto Sans CJK SC", sans-serif; color: #74788f; }
    .scale { width: 300px; }
    .ends { display: flex; justify-content: space-between; padding-bottom: 6px; }
    .range { display: grid; height: 24px; padding: 0 2px; }
    .range > * { grid-area: 1 / 1; align-self: center; }
    .track { height: 12px; margin: 0 12px; background: linear-gradient(90deg, #d5e2fb, #86a3f8); }
    .range input { appearance: none; width: 100%; height: 24px; pointer-events: none; }
    .range input::-webkit-slider-thumb { appearance: none; width: 24px; height: 24px; border-radius: 50%; background: #fff; box-shadow: 0 0 8px rgba(60, 90, 180, 0.18); pointer-events: auto; }
    .canvas { position: relative; }
    .controls { position: absolute; left: 20px; top: 22px; display: grid; gap: 20px; color: #7c7c7c; }
    .stack { display: grid; width: 52px; border-radius: 8px; background: #fff; box-shadow: 0 2px 8px rgba(0, 0, 0, 0.25); }
    .stack button { justify-content: center; height: 52px; }
    .stack button + button { height: 54px; border-top: 2px solid #ccc; }

    .flow { flex: none; width: 360px; padding: 20px 30px 30px; background: #f2f4f8; }
    .links { display: flex; align-items: center; justify-content: flex-end; gap: 20px; padding: 2px 0 14px; }
    .links .rule { height: 20px; }
    .step { display: flex; align-items: center; height: 60px; border-radius: 30px 4px 4px 30px; background: #fff; }
    .badge { display: grid; place-items: center; width: 60px; height: 60px; margin-right: 24px; border-radius: 50%; background: var(--tint); color: var(--teal); }
    .step .name, .item .name { flex: 1; white-space: nowrap; text-align: left; }
    .link { display: flex; width: 2px; height: 60px; margin-left: 29px; background: var(--teal); }
    .kebab { display: grid; justify-content: center; align-content: center; gap: 6px; width: 24px; height: 40px; margin-right: 18px; }
    .kebab i { width: 4px; height: 4px; background: currentColor; }
    .add { display: flex; justify-content: center; width: 60px; height: 60px; border-radius: 50%; background: var(--teal); color: #fff; }
    .group { position: relative; display: grid; gap: 4px; padding: 4px; border: 2px solid var(--teal); border-radius: 4px; background: #fff; }
    .item { display: flex; align-items: center; height: 48px; border-radius: 4px; }
    .item .thumb { display: grid; place-items: center; width: 48px; height: 48px; margin-right: 20px; border-radius: 4px; background: var(--tint); color: var(--teal); }
    .item.on, .item.on .thumb { background: var(--teal); color: #fff; }
    .item .kebab { margin-right: 8px; gap: 5px; }
    .item .kebab i { width: 5px; height: 5px; }
    .mark { position: absolute; inset: -12px -20px -18px -31px; border: 5px solid #fd4343; pointer-events: none; }
  `;

  private kebab(label: string) {
    return html`<button class="kebab" aria-label=${label}><i></i><i></i><i></i></button>`;
  }

  private logo() {
    return html`<svg class="icon" width="50" height="48" viewBox="0 0 150 144" aria-hidden="true">
      <defs>
        <linearGradient id="sky" x1="0" y1="1" x2="1" y2="0"><stop offset=".15" stop-color="#12b3c3" /><stop offset="1" stop-color="#d3fbfc" /></linearGradient>
        <linearGradient id="sea" x1="0" y1="1" x2="1" y2="0"><stop offset=".2" stop-color="#2b83fb" /><stop offset="1" stop-color="#b4d5ff" /></linearGradient>
        <linearGradient id="deep" x1="0" y1="1" x2="1" y2="0"><stop offset="0" stop-color="#3f8cff" /><stop offset="1" stop-color="#1f46b8" /></linearGradient>
      </defs>
      <path d="M10 102A70 70 0 1 1 138 56C124 56 118 68 108 60C98 46 82 44 68 56C50 74 38 112 10 102z" fill="url(#sky)" />
      <path d="M14 116C44 120 58 86 74 70C82 60 92 58 94 68C92 78 90 86 98 84C116 80 124 56 150 58C148 76 138 92 134 102L138 106C134 124 112 144 84 144C66 144 58 144 54 140C70 140 74 134 72 126C50 124 22 124 14 116z" fill="url(#sea)" />
      <path d="M36 122C60 124 62 94 92 94C110 94 120 98 124 100C104 106 108 128 92 140C80 146 64 146 54 142C70 142 76 136 72 124C66 116 58 126 36 122z" fill="url(#deep)" />
    </svg>`;
  }

  private placementGlyph(p: (typeof PLACEMENTS)[number]) {
    const [x, y, w, h] = p.box;
    const cx = x + w / 2, cy = y + h / 2;
    return html`<svg class="icon" width="28" height="28" viewBox="0 0 28 28" aria-hidden="true">
      <rect x=${x} y=${y} width=${w} height=${h} fill="#cfd0da" />
      <path d=${`M${cx - 9} ${cy + 3}l6-5 5 5 7-6`} fill="none" stroke="#fff" stroke-width="3" />
      ${p.bar ? svg`<rect x=${p.bar[0]} y=${p.bar[1]} width=${p.bar[2]} height=${p.bar[3]} fill="#02adc0" />` : ""}
    </svg>`;
  }

  private dropZone(title: string, name: string, agg: string, cls: string) {
    return html`<div class="head"><h2>${title}</h2><button aria-label="清空${title}">${icon(28, icons.broom)}</button></div>
      <div class="drop"><button class="pill ${cls}"><span class="grow">${name}</span><small>${agg}</small><span class="caret"></span></button></div>`;
  }

  render() {
    return html`<div class="window">
      <header class="top">
        <div class="brand">${this.logo()}<span>数跨境BI</span></div>
        <span class="rule"></span>
        <div class="tab first">${icon(28, icons.board, "board")}<span class="name">新建仪表板</span><button class="close" aria-label="关闭新建仪表板">${icon(26, icons.close)}</button></div>
        <div class="tab active">${icon(28, icons.dataset)}<span class="name">订单数据</span><button class="close" aria-label="关闭订单数据">${icon(26, icons.close)}</button></div>
        <nav class="quick">
          <button aria-label="任务">${icon(28, icons.tasks)}</button>
          <button class="alert" aria-label="通知">${icon(28, icons.bell)}</button>
          <button aria-label="定时">${icon(28, icons.timer)}</button>
          <button aria-label="账户">${icon(28, icons.user)}</button>
        </nav>
      </header>
      <div class="tools">
        <button class="tool">${icon(28, icons.params)}参数</button>
        <button class="tool before-rule">${icon(28, icons.plusCircle)}图表</button>
        <span class="rule"></span>
        <button class="tool">${icon(28, icons.exportFile)}导出</button>
        <button class="tool more">${icon(28, icons.more)}更多<span class="caret"></span></button>
        <button class="save">${icon(28, icons.save)}保存</button>
      </div>
      <div class="body">
        <aside class="fields">
          <label class="search">${icon(28, icons.search)}<input type="text" placeholder="搜索字段" aria-label="搜索字段" /></label>
          <ul class="list">
            ${FIELDS.map((f) => html`<li class="field">
              ${f.used ? html`<svg class="used" width="24" height="24" viewBox="0 0 24 24" aria-hidden="true"><path d="M0 0h24L0 24z" fill="#02adc0" /><path d="M3 8l4 4 6-8" fill="none" stroke="#bfeef3" stroke-width="2.400" /></svg>` : ""}
              ${icon(26, icons[f.kind], f.kind)}<span>${f.name}</span></li>`)}
          </ul>
          <span class="grip"><i></i><i></i><i></i></span>
        </aside>
        <section class="config">
          <div class="settings">
            ${this.dropZone("维度", "国家名称", "相同值…", "dim")}
            ${this.dropZone("指标", "订单销售额", "求和", "metric")}
            <h2 class="title">图表设置</h2>
            <div class="row legend-row"><span>图例</span>
              <div class="seg">${PLACEMENTS.map((p) => html`<button class=${classMap({ on: p.id === this.placement })} aria-label=${p.label}
                @click=${() => (this.placement = p.id)}>${this.placementGlyph(p)}</button>`)}</div></div>
            <div class="row select-row"><label for="scope">显示范围</label>
              <div class="pick"><select id="scope"><option>世界</option></select>${icon(22, svg`<path d="M0 8l14 12L28 8" />`)}</div></div>
            <div class="row"><label for="geo">地理图层</label><input id="geo" class="switch" type="checkbox" role="switch" /></div>
            <div class="row last"><label for="tags">显示标签</label><input id="tags" class="switch" type="checkbox" role="switch" checked /></div>
            <label class="tick"><input type="checkbox" checked />维度名称</label>
            <label class="tick"><input type="checkbox" checked />数值</label>
            <div class="radios"><span class="lead">标签重叠</span>
              <label><input type="radio" name="overlap" checked />隐藏</label>
              <label><input type="radio" name="overlap" />调整位置</label></div>
          </div>
          <span class="bar"></span>
        </section>
        <main class="main">
          <h2>筛选</h2>
          <div class="filters">拖拽左侧字段到此处，对原始数据进行筛选</div>
          <section class="card">
            <div class="cardhead"><h3>图表-订单数据</h3><button aria-label="重命名">${icon(26, icons.edit)}</button>
              <div class="acts"><button aria-label="排序">${icon(26, icons.sort)}</button><button aria-label="全屏">${icon(26, icons.expand)}</button></div></div>
            <div class="legend"><span>订单销售额</span>
              <div class="scale"><div class="ends"><span>0</span><span>317,049.25</span></div>
                <div class="range"><span class="track"></span>
                  <input type="range" min="0" max="100" value="0" aria-label="最小值" />
                  <input type="range" min="0" max="100" value="100" aria-label="最大值" /></div></div></div>
            <div class="canvas">
              <world-map></world-map>
              <div class="controls">
                <div class="stack">
                  <button aria-label="放大">${icon(28, svg`<path d="M14 5v18M5 14h18" />`)}</button>
                  <button aria-label="缩小">${icon(28, svg`<path d="M5 14h18" stroke-width="4" />`)}</button>
                </div>
                <div class="stack">
                  <button aria-label="重置">${icon(34, svg`<path d="M24 5.500A13 13 0 1 0 27 18M26.500 0v8h-8" stroke-width="2" /><path d="M7.500 21L14 6l6.500 15M10 16h8" stroke-width="2" />`)}</button>
                  <button aria-label="禁用手势">${icon(36, svg`<path d="M10 26C6 22 2 17 2.500 15s3-3 6 0V3.500c0-4 5-4 5 0V12c6 0 11 0 11 5v1M10 26h5" stroke-width="2" /><circle cx="21" cy="21" r="5.500" stroke-width="2" /><path d="M17.500 24.500l7-7" stroke-width="2" />`)}</button>
                </div>
              </div>
            </div>
          </section>
        </main>
        <aside class="flow">
          <nav class="links"><a href="#preview">预览</a><span class="rule"></span><a href="#batch">批量</a></nav>
          ${STEPS.map((s) => html`<div class="step"><span class="badge">${icon(28, s.glyph)}</span><span class="name">${s.name}</span>${this.kebab(s.name + "操作")}</div><span class="link"></span>`)}
          <button class="add" aria-label="添加步骤">${icon(28, icons.plus)}</button>
          <span class="link"></span>
          <div class="group">
            <div class="item on"><span class="thumb">${icon(30, icons.china)}</span><span class="name">图表-订单…</span>${this.kebab("地图操作")}</div>
            <div class="item"><span class="thumb">${icon(28, icons.bars)}</span><span class="name">图表-订单…</span>${this.kebab("柱图操作")}</div>
            <span class="mark"></span>
          </div>
        </aside>
      </div>
    </div>`;
  }
}
